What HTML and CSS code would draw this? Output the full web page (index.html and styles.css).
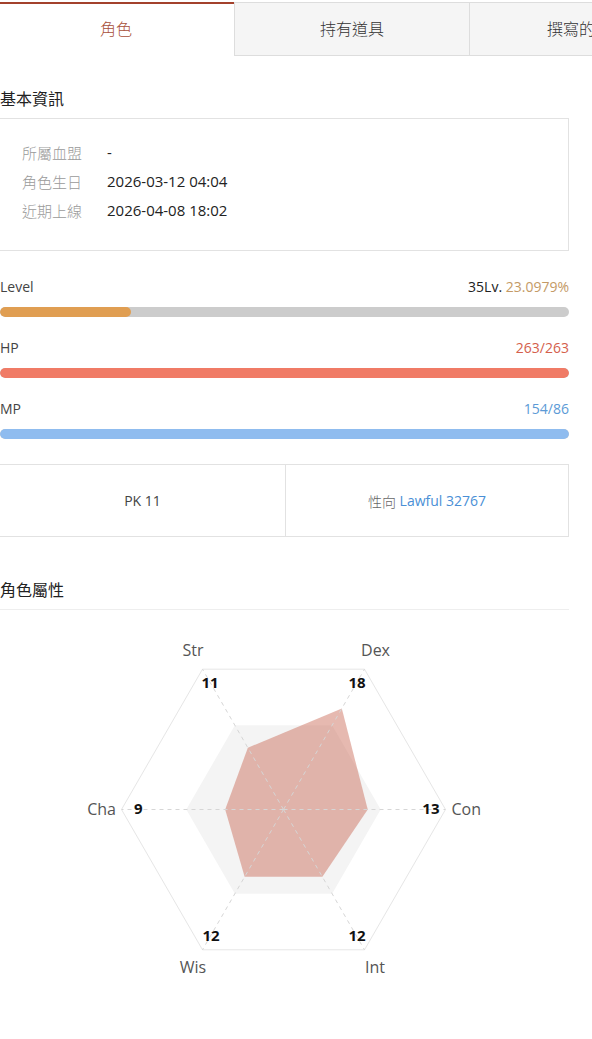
FILE: index.html
```html
<!DOCTYPE html>
<html lang="zh-Hant">
<head>
<meta charset="utf-8">
<title>角色</title>
<link rel="stylesheet" href="styles.css">
</head>
<body>
<div class="tabs-wrap">
  <div class="tabs">
    <div class="tab active">角色</div>
    <div class="tab">持有道具</div>
    <div class="tab">撰寫的文章</div>
  </div>
</div>
<main class="content">
  <h2 class="section-title">基本資訊</h2>
  <div class="info-box">
    <div class="info-row"><span class="info-label">所屬血盟</span><span class="info-value">-</span></div>
    <div class="info-row"><span class="info-label">角色生日</span><span class="info-value">2026-03-12 04:04</span></div>
    <div class="info-row"><span class="info-label">近期上線</span><span class="info-value">2026-04-08 18:02</span></div>
  </div>

  <div class="stat">
    <div class="stat-head"><span>Level</span><span class="stat-val"><span class="lv">35Lv.</span> <span class="pct">23.0979%</span></span></div>
    <div class="bar"><div class="fill fill-level" style="width:23.0979%"></div></div>
  </div>
  <div class="stat">
    <div class="stat-head"><span>HP</span><span class="stat-val hp">263/263</span></div>
    <div class="bar"><div class="fill fill-hp" style="width:100%"></div></div>
  </div>
  <div class="stat">
    <div class="stat-head"><span>MP</span><span class="stat-val mp">154/86</span></div>
    <div class="bar"><div class="fill fill-mp" style="width:100%"></div></div>
  </div>

  <div class="pk-box">
    <div class="pk-cell">PK 11</div>
    <div class="pk-cell"><span class="muted">性向</span>&nbsp;<span class="blue">Lawful 32767</span></div>
  </div>

  <h2 class="section-title attr-title">角色屬性</h2>

  <svg class="radar" width="569" height="420" viewBox="0 0 569 420">
    <polygon class="hex-outer" points="445.5,199.5 364.5,59.2 202.5,59.2 121.5,199.5 202.5,339.8 364.5,339.8"/>
    <polygon class="hex-inner" points="380.7,199.5 332.1,115.3 234.9,115.3 186.3,199.5 234.9,283.7 332.1,283.7"/>
    <polygon class="data" points="367.74,199.5 341.82,98.49 247.86,137.77 225.18,199.5 244.62,266.84 322.38,266.84"/>
    <g class="spokes">
      <line x1="283.5" y1="199.5" x2="445.5" y2="199.5"/>
      <line x1="283.5" y1="199.5" x2="364.5" y2="59.2"/>
      <line x1="283.5" y1="199.5" x2="202.5" y2="59.2"/>
      <line x1="283.5" y1="199.5" x2="121.5" y2="199.5"/>
      <line x1="283.5" y1="199.5" x2="202.5" y2="339.8"/>
      <line x1="283.5" y1="199.5" x2="364.5" y2="339.8"/>
    </g>
    <g class="axis-names">
      <text x="193" y="46" text-anchor="middle">Str</text>
      <text x="375.5" y="46" text-anchor="middle">Dex</text>
      <text x="451.5" y="205" text-anchor="start">Con</text>
      <text x="375" y="363" text-anchor="middle">Int</text>
      <text x="193" y="363" text-anchor="middle">Wis</text>
      <text x="116" y="205" text-anchor="end">Cha</text>
    </g>
    <g class="values">
      <text x="210" y="78" text-anchor="middle">11</text>
      <text x="357" y="78" text-anchor="middle">18</text>
      <text x="439.5" y="204" text-anchor="end">13</text>
      <text x="357" y="331" text-anchor="middle">12</text>
      <text x="211" y="331" text-anchor="middle">12</text>
      <text x="134" y="204" text-anchor="start">9</text>
    </g>
  </svg>
</main>
</body>
</html>
```

FILE: styles.css
```css
html, body {
  margin: 0;
  padding: 0;
  background: #fff;
}
body {
  font-family: "Open Sans", "Noto Sans CJK TC", sans-serif;
  color: #333;
  overflow: hidden;
}
.tabs-wrap {
  overflow: hidden;
  width: 592px;
  padding-top: 2px;
}
.tabs {
  display: flex;
  margin-left: -2px;
}
.tab {
  flex: 0 0 236px;
  box-sizing: border-box;
  height: 54px;
  display: flex;
  align-items: center;
  justify-content: center;
  font-size: 16px;
  color: #333;
  background: #f5f5f5;
  border: 1px solid #dddddd;
  margin-right: -1px;
  padding-bottom: 3px;
  font-family: "Noto Sans CJK TC", sans-serif;
  font-weight: 300;
  white-space: nowrap;
}
.tab.active {
  background: #fff;
  color: #a8503a;
  border: none;
  border-top: 2px solid #a3412c;
  margin-right: 0;
  padding-bottom: 4px;
}
.content {
  width: 569px;
}
.section-title {
  margin: 30px 0 8px;
  font-size: 16px;
  line-height: 24px;
  font-weight: 400;
  color: #222;
  font-family: "Noto Sans CJK TC", sans-serif;
}
.info-box {
  margin-left: -1px;
  width: 570px;
  box-sizing: border-box;
  border: 1px solid #e2e2e2;
  padding: 19px 0 25px 22px;
}
.info-row {
  display: flex;
  line-height: 29px;
  font-size: 15px;
}
.info-label {
  width: 85px;
  color: #9a9a9a;
  font-family: "Noto Sans CJK TC", sans-serif;
  font-weight: 300;
}
.info-value {
  color: #222;
}
.stat {
  margin-top: 26px;
}
.stat + .stat {
  margin-top: 21px;
}
.stat-head {
  display: flex;
  justify-content: space-between;
  font-size: 14px;
  line-height: 20px;
  color: #444;
  margin-bottom: 10px;
}
.lv {
  color: #222;
}
.pct {
  color: #c49a66;
}
.hp {
  color: #d4604c;
}
.mp {
  color: #5b9ad6;
}
.bar {
  height: 10px;
  border-radius: 5px;
  background: #cccccc;
  overflow: hidden;
}
.fill {
  height: 100%;
  border-radius: 5px;
}
.fill-level {
  background: #e09e52;
}
.fill-hp {
  background: #f07b66;
}
.fill-mp {
  background: #8fbcef;
}
.pk-box {
  margin-top: 25px;
  margin-left: -1px;
  width: 570px;
  box-sizing: border-box;
  height: 73px;
  border: 1px solid #e2e2e2;
  display: grid;
  grid-template-columns: 285px 1fr;
}
.pk-cell {
  display: flex;
  align-items: center;
  justify-content: center;
  font-size: 14px;
  color: #444;
}
.pk-cell + .pk-cell {
  border-left: 1px solid #e2e2e2;
}
.muted {
  color: #666;
  font-family: "Noto Sans CJK TC", sans-serif;
  font-weight: 300;
}
.blue {
  color: #4a8fd6;
}
.attr-title {
  margin-top: 40px;
  margin-bottom: 0;
  padding-bottom: 8px;
  border-bottom: 1px solid #eeeeee;
}
.radar {
  display: block;
}
.hex-outer {
  fill: none;
  stroke: #e6e6e6;
  stroke-width: 1;
}
.hex-inner {
  fill: #f4f4f4;
}
.data {
  fill: rgba(200, 100, 80, 0.45);
}
.spokes line {
  stroke: #d6d6d6;
  stroke-width: 1;
  stroke-dasharray: 4 4;
}
.axis-names text {
  font-family: "Open Sans", sans-serif;
  font-size: 16px;
  fill: #555;
}
.values text {
  font-family: "Open Sans", sans-serif;
  font-size: 15px;
  font-weight: 700;
  fill: #111;
}
```
